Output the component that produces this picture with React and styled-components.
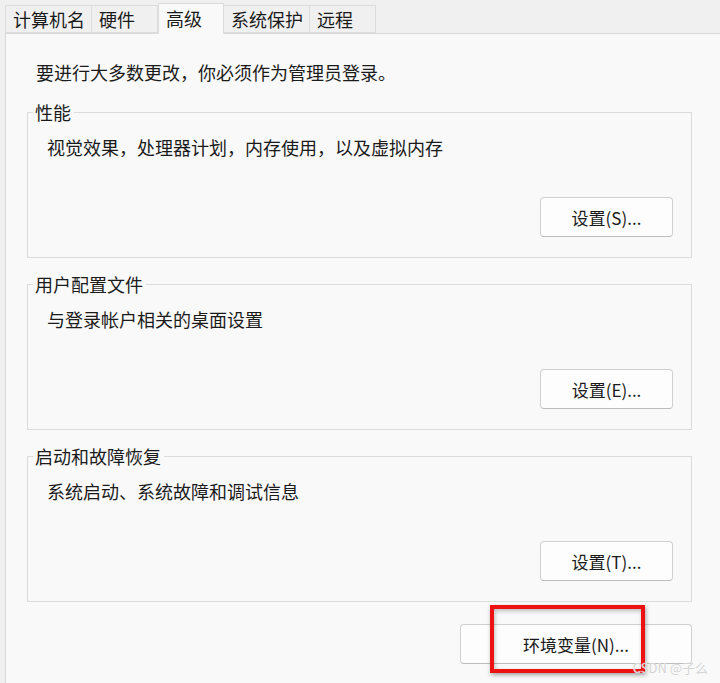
import React from 'react';
import styled, { createGlobalStyle } from 'styled-components';

const GlobalStyle = createGlobalStyle`
  html, body {
    margin: 0;
    padding: 0;
    background: #f0f0f0;
  }
  body {
    font-family: "Noto Sans CJK SC", "Noto Sans", sans-serif;
    color: #1b1b1b;
  }
`;

const tabs = ['计算机名', '硬件', '高级', '系统保护', '远程'];

const groups = [
  { title: '性能', text: '视觉效果，处理器计划，内存使用，以及虚拟内存', button: '设置(S)...' },
  { title: '用户配置文件', text: '与登录帐户相关的桌面设置', button: '设置(E)...' },
  { title: '启动和故障恢复', text: '系统启动、系统故障和调试信息', button: '设置(T)...' },
];

function App() {
  return (
    <Page>
      <GlobalStyle />
      <TabStrip>
        {tabs.map((t) => (
          <Tab key={t} $active={t === '高级'}>{t}</Tab>
        ))}
      </TabStrip>
      <Panel>
        <Notice>要进行大多数更改，你必须作为管理员登录。</Notice>
        {groups.map((g) => (
          <Group key={g.title}>
            <Legend>{g.title}</Legend>
            <GroupText>{g.text}</GroupText>
            <ButtonRow>
              <Button>{g.button}</Button>
            </ButtonRow>
          </Group>
        ))}
        <Footer>
          <WideButton>环境变量(N)...</WideButton>
        </Footer>
      </Panel>
      <Highlight />
      <Watermark>CSDN @子么</Watermark>
    </Page>
  );
}

const Page = styled.div`
  position: relative;
  width: 720px;
  height: 683px;
  overflow: hidden;
  background: #f0f0f0;
`;

const TabStrip = styled.div`
  display: flex;
  align-items: flex-end;
  height: 33px;
  padding-left: 5px;
  position: relative;
  z-index: 1;
`;

const Tab = styled.div`
  box-sizing: border-box;
  min-width: 66px;
  padding: 0 6px 0 7px;
  height: ${(p) => (p.$active ? '31px' : '28px')};
  margin-bottom: ${(p) => (p.$active ? '-1px' : '0')};
  line-height: ${(p) => (p.$active ? '28px' : '26px')};
  font-size: 18px;
  color: #1a1a1a;
  background: ${(p) => (p.$active ? '#f9f9f9' : '#f0f0f0')};
  border: 1px solid #dcdcdc;
  border-bottom: ${(p) => (p.$active ? 'none' : '1px solid #dcdcdc')};
  border-left: ${(p) => (p.$active ? '1px solid #dcdcdc' : 'none')};
  &:first-child {
    border-left: 1px solid #dcdcdc;
  }
`;

const Panel = styled.div`
  box-sizing: border-box;
  margin-left: 5px;
  height: 650px;
  background: #f9f9f9;
  border-top: 1px solid #d9d9d9;
  border-left: 1px solid #d9d9d9;
  padding: 26px 28px 0 21px;
  display: flex;
  flex-direction: column;
`;

const Notice = styled.div`
  font-size: 18px;
  line-height: 24px;
  padding-left: 9px;
  margin-bottom: 16px;
`;

const Group = styled.fieldset`
  margin: 0 0 14px 0;
  padding: 0 18px 20px 19px;
  border: 1px solid #dcdcdc;
  border-radius: 0;
  min-inline-size: auto;
`;

const Legend = styled.legend`
  font-size: 18px;
  line-height: 24px;
  padding: 0 3px 0 2px;
  margin-left: -14px;
`;

const GroupText = styled.div`
  font-size: 18px;
  line-height: 24px;
  margin-top: 11px;
`;

const ButtonRow = styled.div`
  display: flex;
  justify-content: flex-end;
  margin-top: 38px;
`;

const Button = styled.div`
  box-sizing: border-box;
  width: 133px;
  height: 40px;
  display: flex;
  align-items: center;
  justify-content: center;
  background: #fdfdfd;
  border: 1px solid #d0d0d0;
  border-bottom-color: #bcbcbc;
  border-radius: 4px;
  font-size: 17px;
  color: #1a1a1a;
`;

const Footer = styled.div`
  display: flex;
  justify-content: flex-end;
  margin-top: 8px;
  padding-right: 0;
`;

const WideButton = styled(Button)`
  width: 232px;
`;

const Highlight = styled.div`
  position: absolute;
  left: 490px;
  top: 605px;
  width: 155px;
  height: 68px;
  box-sizing: border-box;
  border: 4px solid #ee1111;
  box-shadow: 1px 2px 4px rgba(0, 0, 0, 0.35), inset 1px 2px 4px rgba(0, 0, 0, 0.25);
`;

const Watermark = styled.div`
  position: absolute;
  right: 12px;
  bottom: 6px;
  font-size: 13px;
  color: #d4d4d4;
  text-shadow: 0 0 1px #ffffff;
  font-family: "Noto Sans CJK SC", "Noto Sans", sans-serif;
`;

export default App;
